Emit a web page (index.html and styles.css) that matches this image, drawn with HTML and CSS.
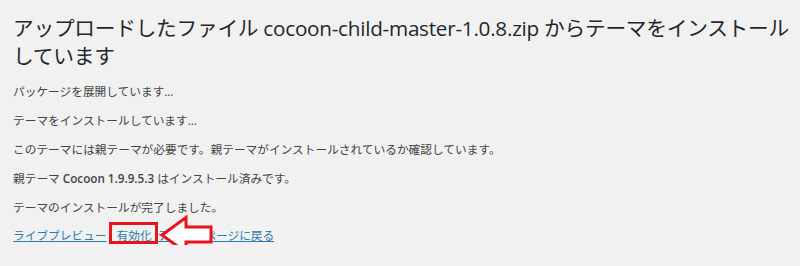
FILE: index.html
```html
<!DOCTYPE html>
<html lang="ja">
<head>
    <meta charset="UTF-8">
    <title>テーマのインストール</title>
    <link rel="stylesheet" href="styles.css">
</head>
<body>
    <div class="wrap">
        <h1 class="title">アップロードしたファイル cocoon-child-master-1.0.8.zip からテーマをインストールしています</h1>

        <p>パッケージを展開しています…</p>
        <p>テーマをインストールしています…</p>
        <p>このテーマには親テーマが必要です。親テーマがインストールされているか確認しています。</p>
        <p>親テーマ <strong>Cocoon 1.9.9.5.3</strong> はインストール済みです。</p>
        <p>テーマのインストールが完了しました。</p>

        <div class="actions">
            <a href="#">ライブプレビュー</a>
            <a href="#" class="activate">有効化</a>
            <a href="#" class="back">テーマのページに戻る</a>
            <!-- annotation arrow pointing at the activate link -->
            <svg class="arrow" width="58" height="44" viewBox="0 0 58 44">
                <polygon points="3,22 27,4.5 27,14 52,14 52,29 27,29 27,39.5" fill="#fff" stroke="#e5141d" stroke-width="3"/>
            </svg>
        </div>
    </div>
</body>
</html>
```

FILE: styles.css
```css
html, body {
    margin: 0;
    padding: 0;
    background-color: #f1f1f1;
}

body {
    font-family: "Open Sans", "Noto Sans CJK JP", sans-serif;
    font-size: 11.7px;
    line-height: 17.5px;
    color: #444;
}

.wrap {
    padding: 15px 4px 0 13px;
}

.title {
    font-size: 20.7px;
    font-weight: 400;
    line-height: 27.5px;
    letter-spacing: -0.25px;
    color: #23282d;
    margin: 0 0 13px 0;
}

p {
    margin: 0 0 11.5px 0;
}

strong {
    font-weight: 600;
}

.actions {
    position: relative;
    display: flex;
    align-items: center;
    margin-top: -1px;
}

.actions a {
    color: #2b7bb0;
    text-decoration: underline;
}

.actions .activate {
    position: relative;
    margin-left: 10px;
}

.actions .activate::after {
    content: "";
    position: absolute;
    left: -8px;
    right: -6px;
    top: -5px;
    bottom: 1px;
    border: 3px solid #e5141d;
}

.actions .back {
    margin-left: 6px;
}

.arrow {
    position: absolute;
    left: 146px;
    top: -14px;
}
```
